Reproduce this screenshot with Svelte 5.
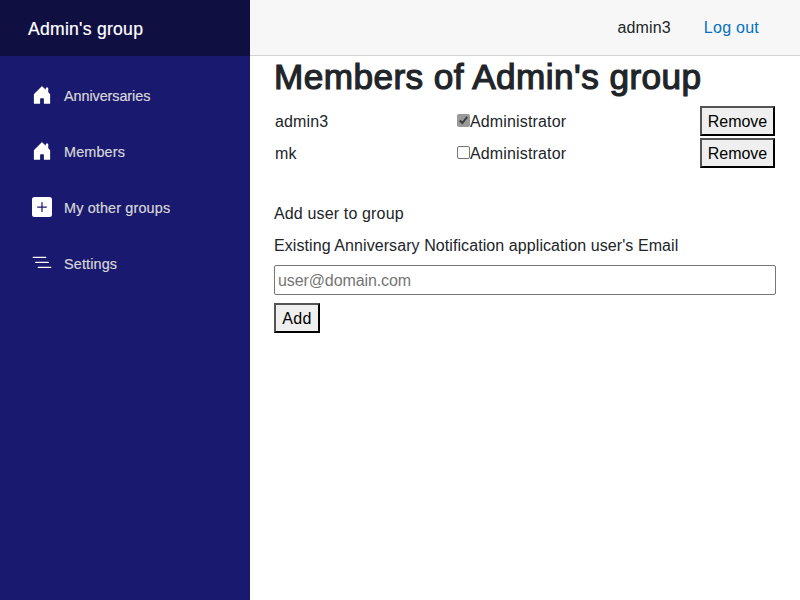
<script>
  const house = 'M6.5 14.5v-3.505c0-.245.25-.495.5-.495h2c.25 0 .5.25.5.5v3.5a.5.5 0 0 0 .5.5h4a.5.5 0 0 0 .5-.5v-7a.5.5 0 0 0-.146-.354L13 5.793V2.5a.5.5 0 0 0-.5-.5h-1a.5.5 0 0 0-.5.5v1.293L8.354 1.146a.5.5 0 0 0-.708 0l-6 6A.5.5 0 0 0 1.5 7.5v7a.5.5 0 0 0 .5.5h4a.5.5 0 0 0 .5-.5Z';
  const plus = 'M2 0a2 2 0 0 0-2 2v12a2 2 0 0 0 2 2h12a2 2 0 0 0 2-2V2a2 2 0 0 0-2-2H2zm6.5 4.5v3h3a.5.5 0 0 1 0 1h-3v3a.5.5 0 0 1-1 0v-3h-3a.5.5 0 0 1 0-1h3v-3a.5.5 0 0 1 1 0z';
  const list = 'M4.5 11.5A.5.5 0 0 1 5 11h10a.5.5 0 0 1 0 1H5a.5.5 0 0 1-.5-.5zm-2-4A.5.5 0 0 1 3 7h10a.5.5 0 0 1 0 1H3a.5.5 0 0 1-.5-.5zm-2-4A.5.5 0 0 1 1 3h10a.5.5 0 0 1 0 1H1a.5.5 0 0 1-.5-.5z';
  const links = [
    { label: 'Anniversaries', icon: house, cls: 'tight' },
    { label: 'Members', icon: house, cls: '' },
    { label: 'My other groups', icon: plus, cls: '' },
    { label: 'Settings', icon: list, cls: '' }
  ];
  const members = [
    { name: 'admin3', admin: true },
    { name: 'mk', admin: false }
  ];
</script>

<div class="page">
  <aside>
    <div class="brand">Admin's group</div>
    <nav>
      {#each links as link}
        <a href="#top">
          <svg viewBox="0 0 16 16" width="20" height="20"><path d={link.icon} /></svg>
          <span class={link.cls}>{link.label}</span>
        </a>
      {/each}
    </nav>
  </aside>
  <main>
    <header>
      <span>admin3</span>
      <a href="#top">Log out</a>
    </header>
    <article>
      <h1>Members of Admin's group</h1>
      {#each members as member}
        <div class="row">
          <span class="name">{member.name}</span>
          <label class="role">
            <span class="check" class:checked={member.admin}>
              {#if member.admin}
                <svg viewBox="0 0 13 13" width="13" height="13"><path d="M2.8 6.5 5.3 9 10.2 2.8" /></svg>
              {/if}
            </span><span class="text">Administrator</span>
          </label>
          <button class="remove">Remove</button>
        </div>
      {/each}
      <form>
        <p>Add user to group</p>
        <label class="caption" for="email">Existing Anniversary Notification application user's Email</label>
        <input id="email" placeholder="user@domain.com" />
        <button class="add" type="button">Add</button>
      </form>
    </article>
  </main>
</div>

<style>
  .page {
    display: flex;
    height: 600px;
    overflow: hidden;
    background: #fff;
    color: #212529;
    font: 16px/24px 'Liberation Sans', Arial, sans-serif;
    letter-spacing: 0.15px;
  }
  .page * {
    box-sizing: border-box;
  }
  aside {
    width: 250px;
    background: #19196f;
  }
  .brand {
    height: 56px;
    padding: 1px 0 0 28px;
    background: #0f0f42;
    color: #fff;
    font-size: 17.6px;
    line-height: 56px;
    letter-spacing: 0.25px;
    -webkit-text-stroke: 0.2px #fff;
  }
  nav {
    padding-top: 12px;
  }
  nav a {
    display: flex;
    align-items: center;
    gap: 12px;
    height: 56px;
    padding-left: 32px;
    color: #d7d7d7;
    font-size: 14.4px;
    text-decoration: none;
    -webkit-text-stroke: 0.2px #d7d7d7;
  }
  nav .tight {
    letter-spacing: -0.07px;
  }
  nav svg {
    fill: #fff;
    margin-top: -2px;
  }
  main {
    flex: 1;
  }
  header {
    display: flex;
    justify-content: flex-end;
    gap: 33px;
    height: 56px;
    padding: 1px 41px 0 0;
    background: #f7f7f7;
    border-bottom: 1px solid #d6d5d5;
    line-height: 54px;
  }
  header a {
    color: #0071c1;
    letter-spacing: 0.25px;
    text-decoration: none;
  }
  article {
    padding: 0 24px;
  }
  h1 {
    margin: 0;
    height: 50px;
    font-size: 35.2px;
    line-height: 42px;
    font-weight: 400;
    letter-spacing: 0.42px;
    white-space: nowrap;
    -webkit-text-stroke: 1.2px #212529;
  }
  .row {
    display: flex;
    align-items: center;
    height: 30px;
    margin-bottom: 2px;
    padding: 0 1px;
  }
  .name {
    width: 182px;
    padding-top: 2px;
  }
  .role {
    display: flex;
    flex: 1;
  }
  .text {
    padding-top: 1px;
  }
  .check {
    width: 13px;
    height: 13px;
    margin-top: 5px;
    border: 1px solid #767676;
    border-radius: 2px;
    background: #fff;
  }
  .check.checked {
    border: none;
    background: #999;
  }
  .check svg {
    display: block;
    fill: none;
    stroke: #3c3c3c;
    stroke-width: 2;
  }
  button {
    height: 30px;
    padding: 2px 6px 0;
    border: 2px outset #000;
    border-radius: 0;
    background: #efefef;
    color: #000;
    font: inherit;
  }
  .remove {
    width: 75px;
    padding: 2px 0 0;
    letter-spacing: -0.05px;
  }
  .add {
    width: 46px;
    letter-spacing: 0.3px;
  }
  form {
    display: flex;
    flex-direction: column;
    align-items: flex-start;
    gap: 8px;
    padding-top: 32px;
  }
  p {
    margin: 0;
  }
  .caption {
    letter-spacing: 0.08px;
  }
  input {
    width: 502px;
    height: 30px;
    margin: -1px 0 0;
    padding: 2px 3px 0;
    border: 1px solid #767676;
    border-radius: 2px;
    font: inherit;
    letter-spacing: -0.1px;
  }
  input::placeholder {
    color: #757575;
  }
</style>
